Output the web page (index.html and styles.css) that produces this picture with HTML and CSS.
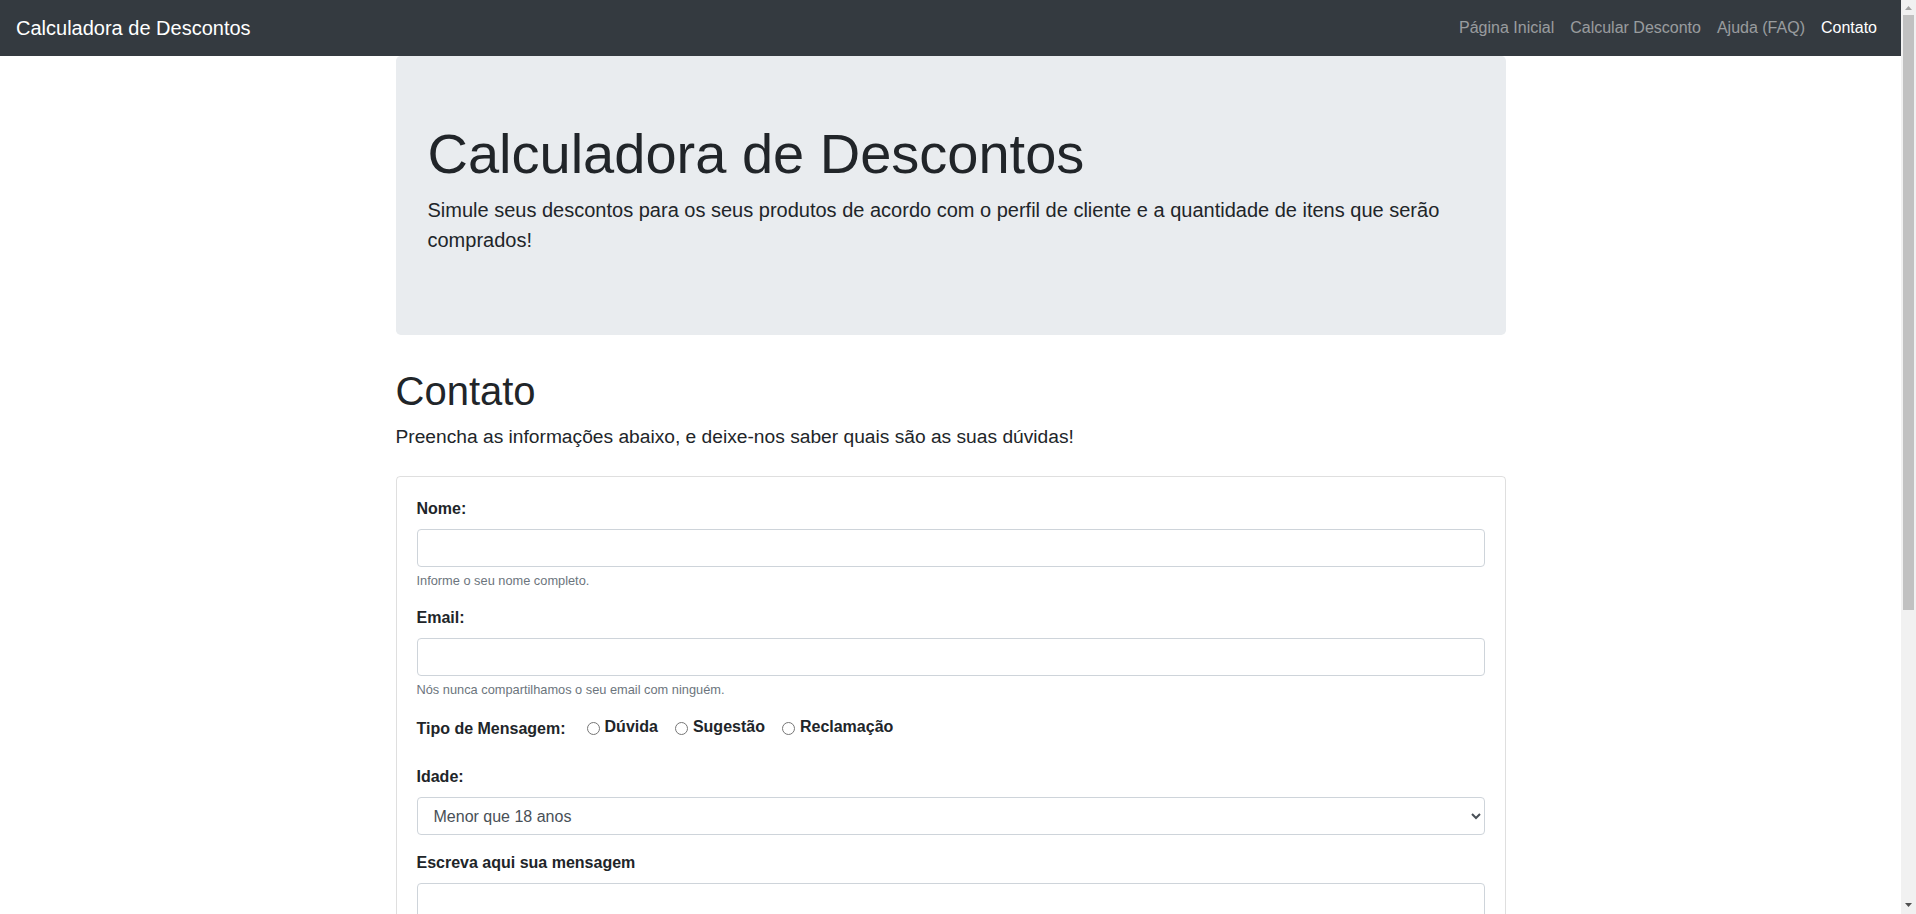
FILE: index.html
```html
<!DOCTYPE html>
<html lang="pt-BR">
<head>
<meta charset="utf-8">
<title>Calculadora de Descontos - Contato</title>
<link rel="stylesheet" href="styles.css">
</head>
<body>
<div class="page">
  <nav class="navbar">
    <a class="brand" href="#">Calculadora de Descontos</a>
    <ul class="nav">
      <li><a class="nav-link" href="#">Página Inicial</a></li>
      <li><a class="nav-link" href="#">Calcular Desconto</a></li>
      <li><a class="nav-link" href="#">Ajuda (FAQ)</a></li>
      <li><a class="nav-link active" href="#">Contato</a></li>
    </ul>
  </nav>
  <main class="container">
    <section class="jumbotron">
      <h1 class="display">Calculadora de Descontos</h1>
      <p class="lead">Simule seus descontos para os seus produtos de acordo com o perfil de cliente e a quantidade de itens que serão comprados!</p>
    </section>
    <h1 class="title">Contato</h1>
    <p class="intro">Preencha as informações abaixo, e deixe-nos saber quais são as suas dúvidas!</p>
    <form class="card">
      <div class="form-group">
        <label class="label" for="nome">Nome:</label>
        <input class="form-control" id="nome" type="text">
        <small class="form-text">Informe o seu nome completo.</small>
      </div>
      <div class="form-group">
        <label class="label" for="email">Email:</label>
        <input class="form-control" id="email" type="email">
        <small class="form-text">Nós nunca compartilhamos o seu email com ninguém.</small>
      </div>
      <div class="form-group radio-row">
        <span class="label radio-title">Tipo de Mensagem:</span>
        <label class="check"><input type="radio" name="tipo" class="radio"><span>Dúvida</span></label>
        <label class="check"><input type="radio" name="tipo" class="radio"><span>Sugestão</span></label>
        <label class="check"><input type="radio" name="tipo" class="radio"><span>Reclamação</span></label>
      </div>
      <div class="form-group">
        <label class="label" for="idade">Idade:</label>
        <select class="form-control select" id="idade">
          <option>Menor que 18 anos</option>
          <option>Entre 18 e 60 anos</option>
          <option>Maior que 60 anos</option>
        </select>
      </div>
      <div class="form-group last">
        <label class="label" for="msg">Escreva aqui sua mensagem</label>
        <textarea class="form-control textarea" id="msg" rows="3"></textarea>
      </div>
    </form>
  </main>
</div>
<aside class="scrollbar" aria-hidden="true">
  <svg class="arrow" width="15" height="15" viewBox="0 0 15 15"><polygon points="4,10 11,10 7.5,6" fill="#a3a3a3"/></svg>
  <div class="track"><div class="thumb"></div></div>
  <svg class="arrow" width="15" height="15" viewBox="0 0 15 15"><polygon points="4,4 11,4 7.5,8" fill="#505050"/></svg>
</aside>
</body>
</html>
```
FILE: styles.css
```css
* {
  box-sizing: border-box;
}

html, body {
  margin: 0;
  padding: 0;
}

body {
  display: flex;
  height: 914px;
  overflow: hidden;
  font-family: "Liberation Sans", Arial, sans-serif;
  font-size: 16px;
  line-height: 1.5;
  color: #212529;
  background: #fff;
}

.page {
  flex: 1;
  min-width: 0;
  overflow: hidden;
}

.scrollbar {
  flex: 0 0 15px;
  display: flex;
  flex-direction: column;
  height: 914px;
  background: #f1f1f1;
}

.arrow {
  display: block;
  flex: 0 0 15px;
}

.track {
  flex: 1;
  padding: 0 2px;
}

.thumb {
  height: 595px;
  background: #c1c1c1;
}

.navbar {
  display: flex;
  align-items: center;
  justify-content: space-between;
  height: 56px;
  padding: 8px 16px;
  background: #343a40;
}

.brand {
  font-size: 20px;
  line-height: 30px;
  padding: 5px 0;
  color: #fff;
  text-decoration: none;
}

.nav {
  display: flex;
  list-style: none;
  margin: 0;
  padding: 0;
}

.nav-link {
  display: block;
  padding: 8px;
  color: rgba(255, 255, 255, 0.5);
  text-decoration: none;
}

.nav-link.active {
  color: #fff;
}

.container {
  width: 1140px;
  margin: 0 auto;
  padding: 0 15px;
}

.jumbotron {
  background: #e9ecef;
  border-radius: 4.8px;
  padding: 64px 32px;
  margin-bottom: 32px;
}

.display {
  font-size: 56px;
  font-weight: 300;
  line-height: 1.2;
  margin: 0 0 8px;
}

.lead {
  font-size: 20px;
  font-weight: 300;
  margin: 0 0 16px;
}

.title {
  font-size: 40px;
  font-weight: 500;
  line-height: 1.2;
  margin: 0 0 8px;
}

.intro {
  font-size: 19.2px;
  line-height: 1.5;
  margin: 0 0 24px;
}

.card {
  border: 1px solid rgba(0, 0, 0, 0.125);
  border-radius: 4px;
  padding: 20px;
}

.form-group {
  margin-bottom: 16px;
}

.label {
  display: inline-block;
  font-weight: bold;
  margin-bottom: 8px;
}

.form-control {
  display: block;
  width: 100%;
  height: 38px;
  padding: 6px 12px;
  font-family: inherit;
  font-size: 16px;
  line-height: 1.5;
  color: #495057;
  background: #fff;
  border: 1px solid #ced4da;
  border-radius: 4px;
  margin: 0;
}

.textarea {
  height: 86px;
  resize: vertical;
}

.form-text {
  display: block;
  margin-top: 4px;
  font-size: 12.8px;
  line-height: 1.5;
  color: #6c757d;
}

.radio-row {
  display: flex;
  align-items: flex-start;
  padding-top: 2px;
}

.radio-title {
  margin-right: 21px;
}

.check {
  display: flex;
  align-items: center;
  font-weight: bold;
  margin-right: 17px;
  margin-top: -1px;
  line-height: 22px;
}

.radio {
  width: 13px;
  height: 13px;
  margin: 2px 5px 0 0;
}
```
